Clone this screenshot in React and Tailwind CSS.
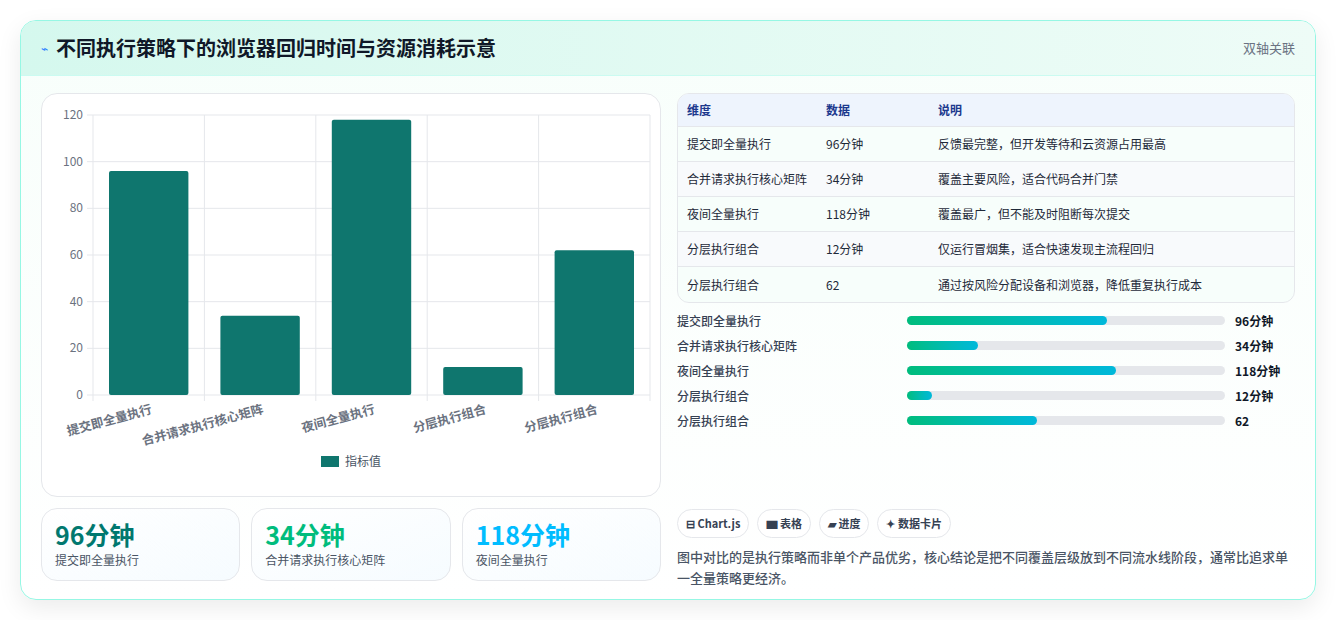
const F = { fontFamily: '"Noto Sans CJK SC", "Noto Sans", sans-serif' };
const cats = ["提交即全量执行", "合并请求执行核心矩阵", "夜间全量执行", "分层执行组合", "分层执行组合"];
const vals = [96, 34, 118, 12, 62];
const rows = [
  ["提交即全量执行", "96分钟", "反馈最完整，但开发等待和云资源占用最高"],
  ["合并请求执行核心矩阵", "34分钟", "覆盖主要风险，适合代码合并门禁"],
  ["夜间全量执行", "118分钟", "覆盖最广，但不能及时阻断每次提交"],
  ["分层执行组合", "12分钟", "仅运行冒烟集，适合快速发现主流程回归"],
  ["分层执行组合", "62", "通过按风险分配设备和浏览器，降低重复执行成本"],
];
const prog = [["提交即全量执行", 200, "96分钟"], ["合并请求执行核心矩阵", 71, "34分钟"], ["夜间全量执行", 209, "118分钟"], ["分层执行组合", 25, "12分钟"], ["分层执行组合", 130, "62"]];

function Chart() {
  const x0 = 51, x1 = 608, y0 = 21, y1 = 301;
  const cw = (x1 - x0) / 5;
  return (
    <svg width="620" height="358" className="block">
      {[0, 20, 40, 60, 80, 100, 120].map((t) => {
        const y = y1 - (t / 120) * (y1 - y0);
        return (
          <g key={t}>
            <line x1={x0 - 6} x2={x1} y1={y} y2={y} stroke="#e5e7eb" />
            <text x={x0 - 10} y={y + 4} textAnchor="end" fontSize="12" fill="#6b7280" style={F}>{t}</text>
          </g>
        );
      })}
      {[0, 1, 2, 3, 4, 5].map((i) => (
        <line key={i} x1={x0 + i * cw} x2={x0 + i * cw} y1={y0} y2={y1 + 6} stroke="#e5e7eb" />
      ))}
      {vals.map((v, i) => {
        const h = (v / 120) * (y1 - y0);
        return <rect key={i} x={x0 + i * cw + 16} y={y1 - h} width={cw - 32} height={h} rx="2" fill="#0f766e" />;
      })}
      {cats.map((c, i) => (
        <text key={i} transform={`translate(${x0 + i * cw + cw / 2 + 4},${y1 + 18}) rotate(-15)`} textAnchor="end" fontSize="12.5" fontWeight="600" fill="#6b7280" style={F}>{c}</text>
      ))}
    </svg>
  );
}

export default function App() {
  return (
    <div className="w-[1336px] h-[620px] bg-white p-5" style={F}>
      <div className="h-[580px] rounded-2xl border border-teal-200 bg-gradient-to-b from-emerald-50/40 to-white shadow-[0_8px_24px_rgba(0,0,0,0.08)] overflow-hidden flex flex-col">
        <div className="h-[55px] shrink-0 bg-gradient-to-r from-[#d5f8ee] to-[#eefcf7] border-b border-teal-100 flex items-center justify-between px-5">
          <div className="flex items-center gap-2">
            <span className="text-blue-500 text-xs">⌁</span>
            <span className="text-[20px] font-bold text-gray-900">不同执行策略下的浏览器回归时间与资源消耗示意</span>
          </div>
          <span className="text-[13px] text-gray-500">双轴关联</span>
        </div>
        <div className="flex gap-4 px-5 pt-[17px]">
          <div className="w-[620px] flex flex-col gap-[11px]">
            <div className="h-[404px] rounded-2xl border border-gray-200 bg-white flex flex-col">
              <Chart />
              <div className="flex items-center justify-center gap-1.5 text-[12px] text-gray-600">
                <span className="w-[18px] h-[11px] bg-[#0f766e]" />指标值
              </div>
            </div>
            <div className="grid grid-cols-3 gap-[11px]">
              {[["96分钟", "text-teal-700", "提交即全量执行"], ["34分钟", "text-emerald-500", "合并请求执行核心矩阵"], ["118分钟", "text-sky-400", "夜间全量执行"]].map(([n, c, l], i) => (
                <div key={i} className="h-[73px] rounded-2xl border border-gray-200 bg-gradient-to-br from-white to-sky-50/60 px-[13px] pt-[8px]">
                  <div className={`text-[25px] font-bold leading-[34px] ${c}`}>{n}</div>
                  <div className="text-[12px] text-gray-600">{l}</div>
                </div>
              ))}
            </div>
          </div>
          <div className="w-[620px] flex flex-col">
            <div className="rounded-xl border border-gray-200 overflow-hidden bg-white text-[12px]">
              <div className="h-[33px] flex items-center bg-[#eef4fd] border-b border-gray-200 text-blue-900 font-semibold">
                <span className="w-[148px] pl-[9px]">维度</span><span className="w-[112px]">数据</span><span>说明</span>
              </div>
              {rows.map((r, i) => (
                <div key={i} className={`h-[35px] flex items-center text-gray-800 ${i < 4 ? "border-b border-gray-200" : ""} ${i % 2 ? "bg-slate-50" : "bg-emerald-50/40"}`}>
                  <span className="w-[148px] pl-[9px]">{r[0]}</span><span className="w-[112px]">{r[1]}</span><span>{r[2]}</span>
                </div>
              ))}
            </div>
            <div className="mt-[5px] flex flex-col">
              {prog.map(([l, w, v], i) => (
                <div key={i} className="h-[25px] flex items-center text-[12px] font-medium text-gray-700">
                  <span className="w-[230px]">{l}</span>
                  <div className="w-[318px] h-[9px] rounded-full bg-gray-200">
                    <div className="h-full rounded-full bg-gradient-to-r from-emerald-500 to-cyan-500" style={{ width: w }} />
                  </div>
                  <span className="ml-[10px] text-gray-900 font-bold">{v}</span>
                </div>
              ))}
            </div>
            <div className="mt-[76px] flex gap-2 text-[11px] font-semibold text-gray-700">
              {["⊟ Chart.js", "▆ 表格", "▰ 进度", "✦ 数据卡片"].map((t) => (
                <span key={t} className="h-[29px] px-2 rounded-full border border-gray-200 bg-white flex items-center">{t}</span>
              ))}
            </div>
            <p className="mt-[8px] text-[13px] leading-[21px] text-gray-600 font-medium">图中对比的是执行策略而非单个产品优劣，核心结论是把不同覆盖层级放到不同流水线阶段，通常比追求单一全量策略更经济。</p>
          </div>
        </div>
      </div>
    </div>
  );
}
